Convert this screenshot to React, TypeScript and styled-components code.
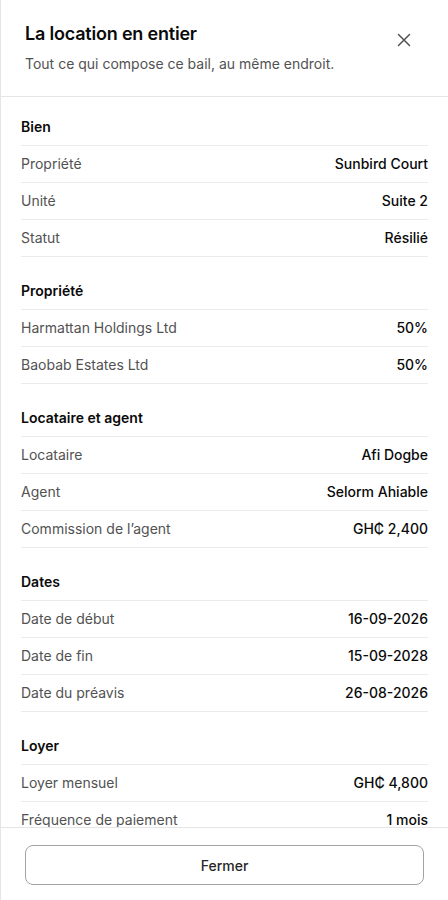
import React from "react";
import styled, { createGlobalStyle } from "styled-components";

const Global = createGlobalStyle`
  html, body { margin: 0; padding: 0; background: #ffffff; }
  body { font-family: Inter, "Noto Sans", sans-serif; -webkit-font-smoothing: antialiased; }
  * { box-sizing: border-box; }
`;

const Sheet = styled.div`
  width: 448px;
  height: 900px;
  display: flex;
  flex-direction: column;
  background: #ffffff;
  border-left: 1px solid #e5e5e5;
  overflow: hidden;
`;

const Header = styled.header`
  flex: none;
  position: relative;
  height: 97px;
  padding: 21px 24px 0 24px;
  border-bottom: 1px solid #e5e5e5;
`;

const Title = styled.h2`
  margin: 0;
  font-size: 18px;
  line-height: 26px;
  font-weight: 600;
  color: #0a0a0a;
  letter-spacing: -0.2px;
`;

const Subtitle = styled.p`
  margin: 7px 0 0 0;
  font-size: 14px;
  line-height: 20px;
  color: #525252;
`;

const CloseButton = styled.button`
  position: absolute;
  top: 30px;
  right: 34px;
  width: 20px;
  height: 20px;
  padding: 0;
  border: none;
  background: transparent;
  display: flex;
  align-items: center;
  justify-content: center;
  color: #525252;
  cursor: pointer;
`;

const Body = styled.div`
  flex: 1;
  min-height: 0;
  overflow: hidden;
  padding: 20px 20px 0 20px;
  display: flex;
  flex-direction: column;
  gap: 24px;
`;

const Section = styled.section`
  display: flex;
  flex-direction: column;
  flex: none;
`;

const SectionTitle = styled.h3`
  margin: 0;
  height: 29px;
  padding-bottom: 8px;
  font-size: 14px;
  line-height: 20px;
  font-weight: 600;
  color: #0a0a0a;
  border-bottom: 1px solid #ebebeb;
`;

const Row = styled.div`
  display: flex;
  justify-content: space-between;
  align-items: center;
  height: 37px;
  border-bottom: 1px solid #ebebeb;
  font-size: 14px;
  line-height: 20px;
`;

const Label = styled.span`
  color: #525252;
`;

const Value = styled.span`
  color: #0a0a0a;
  font-weight: 500;
`;

const Footer = styled.footer`
  flex: none;
  border-top: 1px solid #e5e5e5;
  padding: 17px 24px 16px 24px;
  height: 73px;
  background: #ffffff;
`;

const FooterButton = styled.button`
  width: 100%;
  height: 40px;
  border: 1px solid #a3a3a3;
  border-radius: 8px;
  background: #ffffff;
  font-family: Inter, "Noto Sans", sans-serif;
  font-size: 14px;
  font-weight: 500;
  color: #262626;
  cursor: pointer;
`;

type Item = [string, string];
const sections: { title: string; rows: Item[] }[] = [
  {
    title: "Bien",
    rows: [
      ["Propriété", "Sunbird Court"],
      ["Unité", "Suite 2"],
      ["Statut", "Résilié"],
    ],
  },
  {
    title: "Propriété",
    rows: [
      ["Harmattan Holdings Ltd", "50%"],
      ["Baobab Estates Ltd", "50%"],
    ],
  },
  {
    title: "Locataire et agent",
    rows: [
      ["Locataire", "Afi Dogbe"],
      ["Agent", "Selorm Ahiable"],
      ["Commission de l’agent", "GH₵ 2,400"],
    ],
  },
  {
    title: "Dates",
    rows: [
      ["Date de début", "16-09-2026"],
      ["Date de fin", "15-09-2028"],
      ["Date du préavis", "26-08-2026"],
    ],
  },
  {
    title: "Loyer",
    rows: [
      ["Loyer mensuel", "GH₵ 4,800"],
      ["Fréquence de paiement", "1 mois"],
    ],
  },
];

export default function App() {
  return (
    <>
      <Global />
      <Sheet>
        <Header>
          <Title>La location en entier</Title>
          <Subtitle>Tout ce qui compose ce bail, au même endroit.</Subtitle>
          <CloseButton aria-label="Fermer">
            <svg width="14" height="14" viewBox="0 0 14 14" fill="none" stroke="currentColor" strokeWidth="1.5" strokeLinecap="round">
              <path d="M1.5 1.5 L12.5 12.5 M12.5 1.5 L1.5 12.5" />
            </svg>
          </CloseButton>
        </Header>
        <Body>
          {sections.map((s) => (
            <Section key={s.title}>
              <SectionTitle>{s.title}</SectionTitle>
              {s.rows.map(([l, v]) => (
                <Row key={l}>
                  <Label>{l}</Label>
                  <Value>{v}</Value>
                </Row>
              ))}
            </Section>
          ))}
        </Body>
        <Footer>
          <FooterButton>Fermer</FooterButton>
        </Footer>
      </Sheet>
    </>
  );
}
